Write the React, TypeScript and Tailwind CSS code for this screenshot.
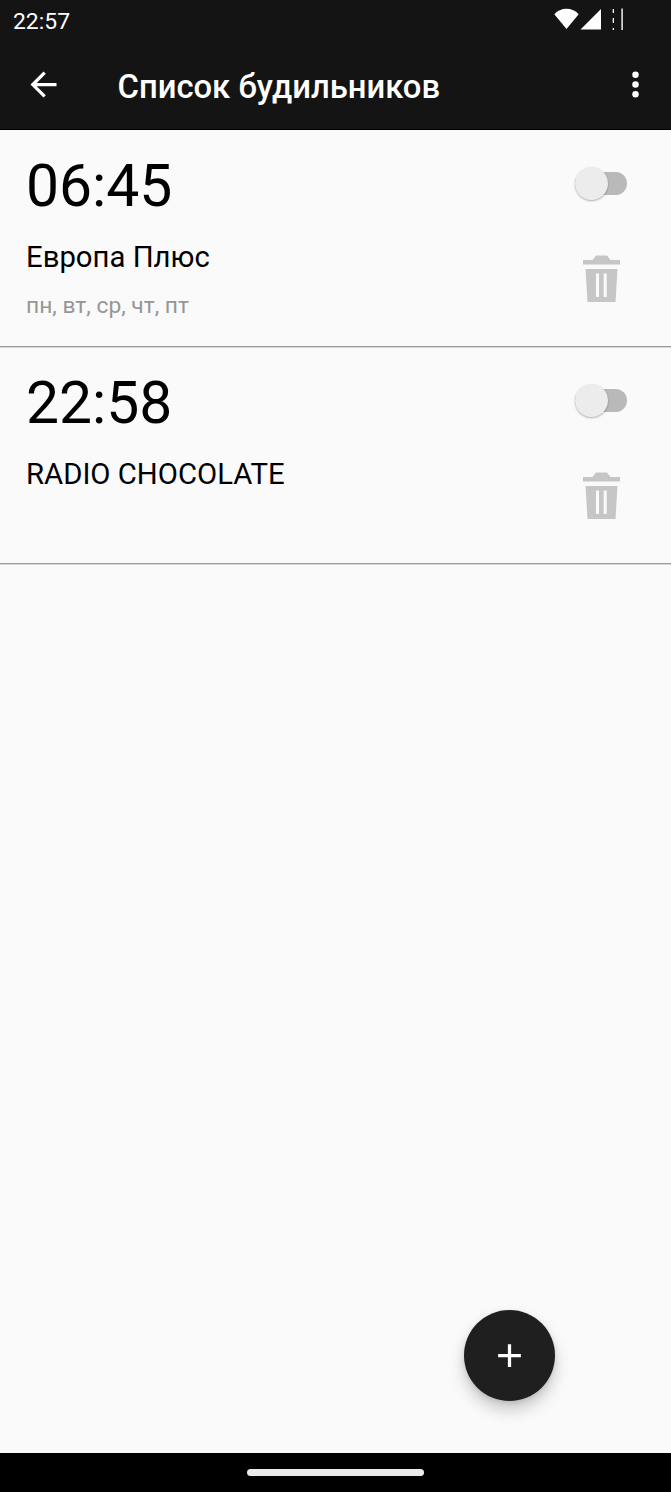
import { useState } from "react";

type Alarm = {
  id: string;
  time: string;
  station: string;
  days: string;
  enabled: boolean;
};

const initialAlarms: Alarm[] = [
  { id: "1", time: "06:45", station: "Европа Плюс", days: "пн, вт, ср, чт, пт", enabled: false },
  { id: "2", time: "22:58", station: "RADIO CHOCOLATE", days: "", enabled: false },
];

function StatusBar() {
  return (
    <div className="flex h-[41px] items-center justify-between pl-[13px] text-white">
      <span className="pt-[2px] text-[22.9px] leading-[26px]">22:57</span>
      <svg className="h-[41px] w-[117px]" viewBox="554 0 117 41" fill="currentColor">
        <path d="M566.5 29L554.3 14.2C557.5 10.8 561.8 8.8 566.5 8.8S575.5 10.8 578.7 14.2Z" />
        <path d="M601 9V29.5H580.5Z" />
        {/* Battery outline */}
        <path d="M612.7 9h1.3v4h-1.3zM612.7 18h1.3v5h-1.3zM612.7 28h1.3v2h-1.3z" />
        <path d="M621.4 8.5h1.4v21.5h-1.4z" />
      </svg>
    </div>
  );
}

function AppBar() {
  return (
    <header className="flex h-[89px] items-center pb-[2px] text-white">
      <button className="ml-6 h-[39px] w-[39px]" aria-label="Назад">
        <svg viewBox="0 0 24 24" fill="currentColor" className="h-full w-full">
          <path d="M20 11H7.83l5.59-5.59L12 4l-8 8 8 8 1.41-1.41L7.83 13H20v-2z" />
        </svg>
      </button>
      <h1 className="ml-[54.5px] flex-1 pt-[4px] text-[32.8px] leading-[38px] font-medium whitespace-nowrap">
        Список будильников
      </h1>
      <button className="mr-4 h-[39px] w-[39px]" aria-label="Меню">
        <svg viewBox="0 0 24 24" fill="currentColor" className="h-full w-full">
          <circle cx="12" cy="6" r="2" />
          <circle cx="12" cy="12" r="2" />
          <circle cx="12" cy="18" r="2" />
        </svg>
      </button>
    </header>
  );
}

function Switch({ checked, onChange }: { checked: boolean; onChange: () => void }) {
  return (
    <button role="switch" aria-checked={checked} onClick={onChange} className="flex h-[33px] w-[52px] items-center">
      <span className={`flex h-[23px] w-full items-center rounded-full ${checked ? "justify-end bg-[#8a8a8a]" : "bg-[#b9b9b9]"}`}>
        <span className="h-[33px] w-[33px] shrink-0 rounded-full bg-[#ececec] shadow-[0_1px_2px_rgba(0,0,0,0.3)]" />
      </span>
    </button>
  );
}

function TrashIcon() {
  return (
    <svg viewBox="0 0 37 47" className="h-[47px] w-[37px]" fill="#c6c6c6">
      <path d="M0 5H9.500L13 .5H24L27.500 5H37V9.500H0Z" />
      <path fillRule="evenodd" d="M2.500 14H34.500L32.500 47H4.500ZM13 18.500V42H16V18.500ZM20.700 18.500V42H23.700V18.500Z" />
    </svg>
  );
}

function AlarmRow({ alarm, onToggle, onDelete }: { alarm: Alarm; onToggle: () => void; onDelete: () => void }) {
  return (
    <li className="flex h-[217px] justify-between border-b border-[#9c9c9c] pl-[26px] shadow-[0_1px_0_#d8d8d8]">
      <div className="pt-[21px]">
        <div className="text-[58.8px] leading-[70px] text-black">{alarm.time}</div>
        <div className="mt-[19px] text-[29.3px] leading-[34px] text-black">{alarm.station}</div>
        <div className="mt-[19px] text-[22.8px] leading-[26px] text-[#969696]">{alarm.days}</div>
      </div>
      <div className="mr-[44px] flex flex-col items-center pt-[37px]">
        <Switch checked={alarm.enabled} onChange={onToggle} />
        <button className="mt-[55px]" onClick={onDelete} aria-label="Удалить">
          <TrashIcon />
        </button>
      </div>
    </li>
  );
}

export default function App() {
  const [alarms, setAlarms] = useState<Alarm[]>(initialAlarms);

  const toggleAlarm = (id: string) => {
    setAlarms(alarms.map((a) => (a.id === id ? { ...a, enabled: !a.enabled } : a)));
  };

  const deleteAlarm = (id: string) => {
    setAlarms(alarms.filter((a) => a.id !== id));
  };

  return (
    <div className="flex h-[1492px] w-full flex-col bg-[#fafafa] font-[Roboto,sans-serif]">
      {/* Top bars */}
      <div className="h-[130px] shrink-0 border-b border-black bg-[#141414]">
        <StatusBar />
        <AppBar />
      </div>

      {/* Alarm list */}
      <main className="flex flex-1 flex-col justify-between">
        <ul>
          {alarms.map((alarm) => (
            <AlarmRow
              key={alarm.id}
              alarm={alarm}
              onToggle={() => toggleAlarm(alarm.id)}
              onDelete={() => deleteAlarm(alarm.id)}
            />
          ))}
        </ul>
        <button
          className="mr-[116.5px] mb-[52.5px] flex h-[91px] w-[91px] items-center justify-center self-end rounded-full bg-[#1f1f1f] text-white shadow-[0_9px_16px_rgba(0,0,0,0.2),0_2px_5px_rgba(0,0,0,0.1)]"
          aria-label="Добавить"
        >
          <svg viewBox="0 0 24 24" className="h-[39px] w-[39px]" fill="currentColor">
            <path d="M19 13h-6v6h-2v-6H5v-2h6V5h2v6h6v2z" />
          </svg>
        </button>
      </main>

      {/* Navigation bar */}
      <div className="flex h-[39px] shrink-0 items-center justify-center bg-black">
        <div className="h-[7px] w-[177px] rounded-full bg-[#ebe9eb]" />
      </div>
    </div>
  );
}
